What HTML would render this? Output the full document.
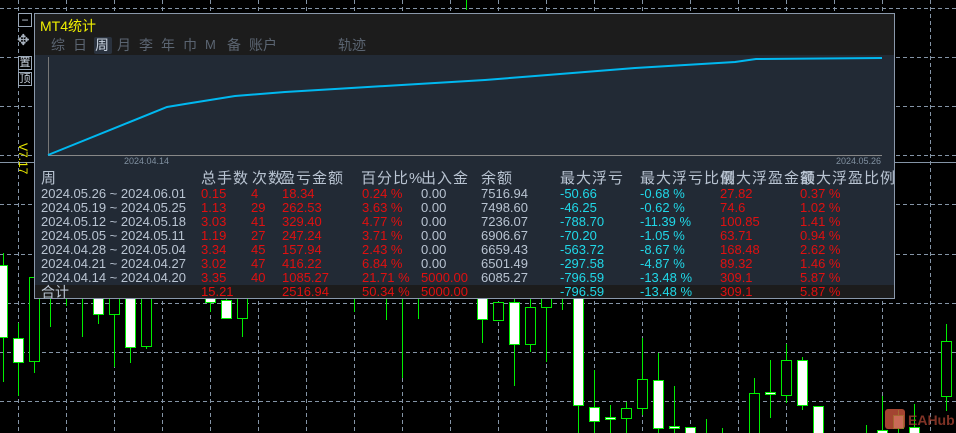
<!DOCTYPE html>
<html><head><meta charset="utf-8"><style>
*{margin:0;padding:0;box-sizing:border-box}
body{width:956px;height:433px;background:#000;position:relative;overflow:hidden;font-family:"Liberation Sans","Noto Sans CJK SC",sans-serif}
.a{position:absolute;white-space:nowrap}
#panel{position:absolute;left:34px;top:13px;width:861px;height:286px;border:1px solid #8a98aa;background:#222a35}
.g{color:#b9c4d2}.r{color:#e01010}.c{color:#20d8e8}
.row{position:absolute;left:0;width:859px;height:14px;font-size:13px;line-height:14px}
.row span{position:absolute;top:0;white-space:nowrap}
.tab{position:absolute;top:22px;font-size:14px;color:#5b6572;line-height:18px}
.btn{position:absolute;left:18px;width:14px;height:14px;border:1px solid #9aa8b8;color:#c8d2de;font-size:12px;line-height:12px;text-align:center;background:#000}
.hd span{position:absolute;white-space:nowrap;letter-spacing:1px}
</style></head><body>
<svg class="a" style="left:0;top:0" width="956" height="433">
<g stroke="#8494a6" stroke-dasharray="4,3" stroke-width="1">
<line x1="18.5" y1="0" x2="18.5" y2="433"/><line x1="66.5" y1="0" x2="66.5" y2="433"/><line x1="114.5" y1="0" x2="114.5" y2="433"/><line x1="162.5" y1="0" x2="162.5" y2="433"/><line x1="210.5" y1="0" x2="210.5" y2="433"/><line x1="258.5" y1="0" x2="258.5" y2="433"/><line x1="306.5" y1="0" x2="306.5" y2="433"/><line x1="354.5" y1="0" x2="354.5" y2="433"/><line x1="402.5" y1="0" x2="402.5" y2="433"/><line x1="450.5" y1="0" x2="450.5" y2="433"/><line x1="498.5" y1="0" x2="498.5" y2="433"/><line x1="546.5" y1="0" x2="546.5" y2="433"/><line x1="594.5" y1="0" x2="594.5" y2="433"/><line x1="642.5" y1="0" x2="642.5" y2="433"/><line x1="690.5" y1="0" x2="690.5" y2="433"/><line x1="738.5" y1="0" x2="738.5" y2="433"/><line x1="786.5" y1="0" x2="786.5" y2="433"/><line x1="834.5" y1="0" x2="834.5" y2="433"/><line x1="882.5" y1="0" x2="882.5" y2="433"/><line x1="930.5" y1="0" x2="930.5" y2="433"/>
<line x1="0" y1="8.5" x2="956" y2="8.5"/><line x1="0" y1="57.5" x2="956" y2="57.5"/><line x1="0" y1="106.5" x2="956" y2="106.5"/><line x1="0" y1="155.5" x2="956" y2="155.5"/><line x1="0" y1="204.5" x2="956" y2="204.5"/><line x1="0" y1="254.5" x2="956" y2="254.5"/><line x1="0" y1="303.5" x2="956" y2="303.5"/><line x1="0" y1="352.5" x2="956" y2="352.5"/><line x1="0" y1="401.5" x2="956" y2="401.5"/>
</g>
<line x1="0" y1="162.5" x2="956" y2="162.5" stroke="#8494a6"/>
<g stroke="#00ee00" stroke-width="1">
<line x1="466.5" y1="0" x2="466.5" y2="10"/>
<line x1="3.5" y1="253" x2="3.5" y2="382"/><rect x="-1.5" y="265.5" width="9" height="72" fill="#fff"/>
<line x1="18.5" y1="323" x2="18.5" y2="396"/><rect x="13.5" y="338.5" width="10" height="24" fill="#fff"/>
<line x1="34.5" y1="340" x2="34.5" y2="373"/><rect x="29.5" y="277.5" width="10" height="84" fill="#000"/>
<line x1="50.5" y1="290" x2="50.5" y2="327"/><line x1="66.5" y1="290" x2="66.5" y2="306"/><line x1="82.5" y1="290" x2="82.5" y2="337"/>
<line x1="98.5" y1="290" x2="98.5" y2="324"/><rect x="93.5" y="290.5" width="10" height="24" fill="#fff"/>
<line x1="114.5" y1="290" x2="114.5" y2="367"/><rect x="109.5" y="290.5" width="10" height="24" fill="#000"/>
<line x1="130.5" y1="290" x2="130.5" y2="363"/><rect x="125.5" y="290.5" width="10" height="57" fill="#fff"/>
<line x1="146.5" y1="290" x2="146.5" y2="349"/><rect x="141.5" y="290.5" width="10" height="56" fill="#000"/>
<line x1="210.5" y1="298" x2="210.5" y2="312"/><rect x="205.5" y="298.5" width="10" height="4" fill="#fff"/>
<line x1="226.5" y1="298" x2="226.5" y2="319"/><rect x="221.5" y="300.5" width="10" height="18" fill="#fff"/>
<line x1="242.5" y1="298" x2="242.5" y2="337"/><rect x="237.5" y="298.5" width="10" height="20" fill="#000"/>
<line x1="354.5" y1="298" x2="354.5" y2="312"/><line x1="386.5" y1="298" x2="386.5" y2="320"/><line x1="402.5" y1="298" x2="402.5" y2="378"/><line x1="418.5" y1="298" x2="418.5" y2="319"/>
<line x1="482.5" y1="298" x2="482.5" y2="343"/><rect x="477.5" y="298.5" width="10" height="21" fill="#fff"/>
<rect x="493.5" y="302.5" width="10" height="18" fill="#000"/>
<line x1="514.5" y1="298" x2="514.5" y2="386"/><rect x="509.5" y="302.5" width="10" height="42" fill="#fff"/>
<line x1="530.5" y1="298" x2="530.5" y2="352"/><rect x="525.5" y="307.5" width="10" height="37" fill="#000"/>
<line x1="546.5" y1="298" x2="546.5" y2="362"/><rect x="541.5" y="298.5" width="10" height="9" fill="#000"/>
<line x1="562.5" y1="298" x2="562.5" y2="310"/>
<line x1="578.5" y1="298" x2="578.5" y2="433"/><rect x="573.5" y="298.5" width="10" height="107" fill="#fff"/>
<line x1="594.5" y1="370" x2="594.5" y2="433"/><rect x="589.5" y="407.5" width="10" height="14" fill="#fff"/>
<line x1="610.5" y1="405" x2="610.5" y2="433"/><rect x="605.5" y="417.5" width="10" height="2" fill="#fff"/>
<line x1="626.5" y1="402" x2="626.5" y2="433"/><rect x="621.5" y="408.5" width="10" height="10" fill="#000"/>
<line x1="642.5" y1="338" x2="642.5" y2="415"/><rect x="637.5" y="379.5" width="10" height="29" fill="#000"/>
<line x1="658.5" y1="353" x2="658.5" y2="433"/><rect x="653.5" y="380.5" width="10" height="48" fill="#fff"/>
<line x1="674.5" y1="386" x2="674.5" y2="433"/><rect x="669.5" y="426.5" width="10" height="2" fill="#fff"/>
<rect x="685.5" y="427.5" width="10" height="8" fill="#fff"/>
<line x1="706.5" y1="419" x2="706.5" y2="433"/><line x1="722.5" y1="428" x2="722.5" y2="433"/>
<line x1="754.5" y1="378" x2="754.5" y2="433"/><rect x="749.5" y="393.5" width="10" height="42" fill="#000"/>
<line x1="770.5" y1="360" x2="770.5" y2="418"/><rect x="765.5" y="392.5" width="10" height="2" fill="#fff"/>
<line x1="786.5" y1="344" x2="786.5" y2="403"/><rect x="781.5" y="360.5" width="10" height="35" fill="#000"/>
<line x1="802.5" y1="357" x2="802.5" y2="410"/><rect x="797.5" y="360.5" width="10" height="45" fill="#fff"/>
<line x1="818.5" y1="406" x2="818.5" y2="433"/><rect x="813.5" y="406.5" width="10" height="30" fill="#fff"/>
<line x1="866.5" y1="425" x2="866.5" y2="433"/>
<line x1="882.5" y1="396" x2="882.5" y2="433"/><rect x="877.5" y="430.5" width="10" height="5" fill="#fff"/>
<line x1="898.5" y1="410" x2="898.5" y2="433"/><rect x="893.5" y="415.5" width="10" height="13" fill="#fff"/>
<line x1="914.5" y1="404" x2="914.5" y2="433"/><rect x="909.5" y="427.5" width="10" height="8" fill="#fff"/>
<line x1="946.5" y1="324" x2="946.5" y2="411"/><rect x="941.5" y="341.5" width="10" height="55" fill="#000"/>
</g>
<rect x="885" y="409" width="20" height="20" rx="3" fill="#c0503a" opacity="0.85"/>
<text x="908" y="425" font-family="Liberation Sans" font-size="14" font-weight="bold" fill="#a04030" opacity="0.8">EAHub</text>
</svg>

<div class="btn" style="top:13px">−</div>
<div class="a" style="left:17px;top:33px;color:#aab4c0;font-size:15px;line-height:15px">✥</div>
<div class="btn" style="top:56px;font-size:11px">置</div>
<div class="btn" style="top:72px;font-size:11px">顶</div>
<div class="a" style="left:30px;top:143px;color:#e8e800;font-size:12px;transform-origin:0 0;transform:rotate(90deg)">V7.17</div>

<div id="panel">
<div class="a" style="left:0;top:0;width:859px;height:41px;background:#1c1c1c"></div>
<div class="a" style="left:5px;top:3px;color:#f0f000;font-size:14px;line-height:18px">MT4统计</div>
<div class="a" style="left:59px;top:23px;width:18px;height:17px;background:#2a323e;border-radius:2px"></div>
<span class="tab" style="left:16px">综</span><span class="tab" style="left:38px">日</span><span class="tab" style="left:60px;color:#c8d2de">周</span><span class="tab" style="left:82px">月</span><span class="tab" style="left:104px">李</span><span class="tab" style="left:126px">年</span><span class="tab" style="left:148px">巾</span><span class="tab" style="left:170px;font-size:13px">M</span><span class="tab" style="left:192px">备</span><span class="tab" style="left:214px">账户</span><span class="tab" style="left:303px">轨迹</span>
<svg class="a" style="left:0;top:0" width="859" height="160">
<line x1="13.5" y1="43" x2="13.5" y2="142" stroke="#777"/>
<line x1="13" y1="141.5" x2="847" y2="141.5" stroke="#888"/>
<polyline fill="none" stroke="#00b8f0" stroke-width="2" points="13,141 132,93 150,90 200,82 250,78 300,75 350,72 400,69 450,66 500,62 550,58 600,54 650,51 700,48 721,45 847,44"/>
<text x="89" y="150" font-size="9" fill="#8090a0" font-family="Liberation Sans">2024.04.14</text>
<text x="801" y="150" font-size="9" fill="#8090a0" font-family="Liberation Sans">2024.05.26</text>
</svg>
<div class="a g hd" style="left:0;top:155px;font-size:15px;line-height:20px;width:859px;height:20px">
<span style="left:6px">周</span><span style="left:166px">总手数</span><span style="left:217px">次数</span><span style="left:245px">盈亏金额</span><span style="left:326px">百分比%</span><span style="left:386px">出入金</span><span style="left:446px">余额</span><span style="left:525px">最大浮亏</span><span style="left:605px">最大浮亏比例</span><span style="left:685px">最大浮盈金额</span><span style="left:765px">最大浮盈比例</span>
</div>
<div class="row" style="top:173px"><span class="g" style="left:6px">2024.05.26 ~ 2024.06.01</span><span class="r" style="left:166px">0.15</span><span class="r" style="left:216px">4</span><span class="r" style="left:247px">18.34</span><span class="r" style="left:327px">0.24 %</span><span class="g" style="left:386px">0.00</span><span class="g" style="left:446px">7516.94</span><span class="c" style="left:525px">-50.66</span><span class="c" style="left:605px">-0.68 %</span><span class="r" style="left:685px">27.82</span><span class="r" style="left:765px">0.37 %</span></div>
<div class="row" style="top:187px"><span class="g" style="left:6px">2024.05.19 ~ 2024.05.25</span><span class="r" style="left:166px">1.13</span><span class="r" style="left:216px">29</span><span class="r" style="left:247px">262.53</span><span class="r" style="left:327px">3.63 %</span><span class="g" style="left:386px">0.00</span><span class="g" style="left:446px">7498.60</span><span class="c" style="left:525px">-46.25</span><span class="c" style="left:605px">-0.62 %</span><span class="r" style="left:685px">74.6</span><span class="r" style="left:765px">1.02 %</span></div>
<div class="row" style="top:201px"><span class="g" style="left:6px">2024.05.12 ~ 2024.05.18</span><span class="r" style="left:166px">3.03</span><span class="r" style="left:216px">41</span><span class="r" style="left:247px">329.40</span><span class="r" style="left:327px">4.77 %</span><span class="g" style="left:386px">0.00</span><span class="g" style="left:446px">7236.07</span><span class="c" style="left:525px">-788.70</span><span class="c" style="left:605px">-11.39 %</span><span class="r" style="left:685px">100.85</span><span class="r" style="left:765px">1.41 %</span></div>
<div class="row" style="top:215px"><span class="g" style="left:6px">2024.05.05 ~ 2024.05.11</span><span class="r" style="left:166px">1.19</span><span class="r" style="left:216px">27</span><span class="r" style="left:247px">247.24</span><span class="r" style="left:327px">3.71 %</span><span class="g" style="left:386px">0.00</span><span class="g" style="left:446px">6906.67</span><span class="c" style="left:525px">-70.20</span><span class="c" style="left:605px">-1.05 %</span><span class="r" style="left:685px">63.71</span><span class="r" style="left:765px">0.94 %</span></div>
<div class="row" style="top:229px"><span class="g" style="left:6px">2024.04.28 ~ 2024.05.04</span><span class="r" style="left:166px">3.34</span><span class="r" style="left:216px">45</span><span class="r" style="left:247px">157.94</span><span class="r" style="left:327px">2.43 %</span><span class="g" style="left:386px">0.00</span><span class="g" style="left:446px">6659.43</span><span class="c" style="left:525px">-563.72</span><span class="c" style="left:605px">-8.67 %</span><span class="r" style="left:685px">168.48</span><span class="r" style="left:765px">2.62 %</span></div>
<div class="row" style="top:243px"><span class="g" style="left:6px">2024.04.21 ~ 2024.04.27</span><span class="r" style="left:166px">3.02</span><span class="r" style="left:216px">47</span><span class="r" style="left:247px">416.22</span><span class="r" style="left:327px">6.84 %</span><span class="g" style="left:386px">0.00</span><span class="g" style="left:446px">6501.49</span><span class="c" style="left:525px">-297.58</span><span class="c" style="left:605px">-4.87 %</span><span class="r" style="left:685px">89.32</span><span class="r" style="left:765px">1.46 %</span></div>
<div class="row" style="top:257px"><span class="g" style="left:6px">2024.04.14 ~ 2024.04.20</span><span class="r" style="left:166px">3.35</span><span class="r" style="left:216px">40</span><span class="r" style="left:247px">1085.27</span><span class="r" style="left:327px">21.71 %</span><span class="r" style="left:386px">5000.00</span><span class="g" style="left:446px">6085.27</span><span class="c" style="left:525px">-796.59</span><span class="c" style="left:605px">-13.48 %</span><span class="r" style="left:685px">309.1</span><span class="r" style="left:765px">5.87 %</span></div>
<div class="a" style="left:0;top:271px;width:859px;height:13px;background:#1c1c1c"></div>
<div class="row" style="top:271px"><span class="g" style="left:6px;font-size:14px">合计</span><span class="r" style="left:166px">15.21</span><span class="r" style="left:247px">2516.94</span><span class="r" style="left:327px">50.34 %</span><span class="r" style="left:386px">5000.00</span><span class="c" style="left:525px">-796.59</span><span class="c" style="left:605px">-13.48 %</span><span class="r" style="left:685px">309.1</span><span class="r" style="left:765px">5.87 %</span></div>
</div>
</body></html>
